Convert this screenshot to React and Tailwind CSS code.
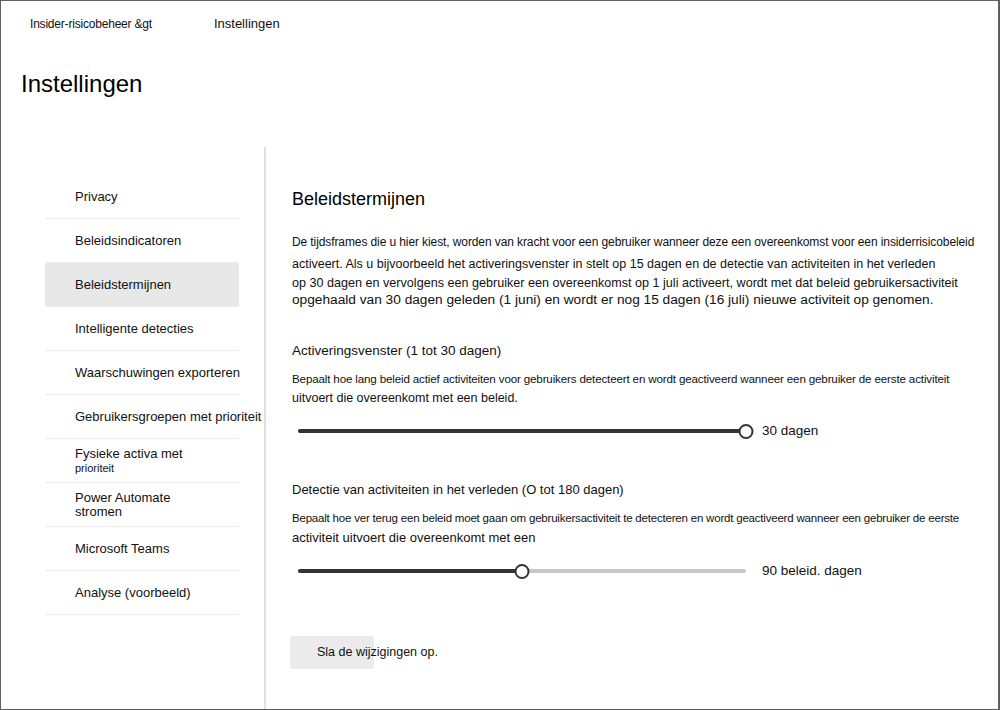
import React from "react";

const NAV_ITEMS = [
  { label: "Privacy" },
  { label: "Beleidsindicatoren" },
  { label: "Beleidstermijnen", active: true },
  { label: "Intelligente detecties" },
  { label: "Waarschuwingen exporteren" },
  { label: "Gebruikersgroepen met prioriteit" },
  { label: "Fysieke activa met", sub: "prioriteit" },
  { label: "Power Automate", sub: "stromen", subLarge: true },
  { label: "Microsoft Teams" },
  { label: "Analyse (voorbeeld)" },
];

function NavItem({ item }) {
  return (
    <div
      className={`h-[44px] flex flex-col justify-center pl-[30px] border-b border-[#ececec] ${
        item.active ? "bg-[#e8e8e8] rounded-[2px]" : ""
      }`}
    >
      <span className="text-[13px] leading-[15px] text-[#111] whitespace-nowrap">{item.label}</span>
      {item.sub ? (
        <span
          className={`${item.subLarge ? "text-[13px]" : "text-[11px]"} leading-[14px] text-[#111]`}
        >
          {item.sub}
        </span>
      ) : null}
    </div>
  );
}

function Slider({ percent }) {
  return (
    <div className="relative w-[448px] h-[16px] flex items-center">
      <div className="w-full h-[4px] rounded-full bg-[#c8c8c8]" />
      <div
        className="absolute left-0 h-[4px] rounded-full bg-[#333]"
        style={{ width: `${percent}%` }}
      />
      <div
        className="absolute w-[15px] h-[15px] rounded-full bg-white border-2 border-[#333] -translate-x-1/2"
        style={{ left: `${percent}%` }}
      />
    </div>
  );
}

export default function App() {
  return (
    <div
      className="w-[1000px] h-[710px] bg-white border border-r-2 border-[#5f5f5f] overflow-hidden flex flex-col"
      style={{ fontFamily: '"Liberation Sans", Arial, sans-serif' }}
    >
      <div className="flex items-center h-[22px] mt-[12px] text-[#111]">
        <span className="ml-[29px] text-[12px] tracking-[-0.2px]">Insider-risicobeheer &amp;gt</span>
        <span className="ml-[62px] text-[13px]">Instellingen</span>
      </div>
      <h1 className="ml-[20px] mt-[34px] text-[24px] leading-[30px] text-black">Instellingen</h1>

      <div className="flex flex-1 mt-[48px]">
        <div className="w-[265px] shrink-0 border-r-2 border-[#e0e0e0]">
          <nav className="ml-[44px] mt-[28px] w-[194px]">
            {NAV_ITEMS.map((item) => (
              <NavItem key={item.label} item={item} />
            ))}
          </nav>
        </div>

        <div className="pl-[26px] pt-[41px] text-[#111]">
          <h2 className="text-[18px] leading-[22px] text-black">Beleidstermijnen</h2>

          <div className="mt-[22px] text-[13px]">
            <div className="text-[12px] tracking-[-0.1px] leading-[20px] whitespace-nowrap">
              De tijdsframes die u hier kiest, worden van kracht voor een gebruiker wanneer deze een overeenkomst voor een insiderrisicobeleid
            </div>
            <div className="leading-[24px] text-[12.5px] whitespace-nowrap">
              activeert. Als u bijvoorbeeld het activeringsvenster in stelt op 15 dagen en de detectie van activiteiten in het verleden
            </div>
            <div className="leading-[14px] text-[12.6px] whitespace-nowrap">
              op 30 dagen en vervolgens een gebruiker een overeenkomst op 1 juli activeert, wordt met dat beleid gebruikersactiviteit
            </div>
            <div className="leading-[20px] text-[13.7px] whitespace-nowrap">
              opgehaald van 30 dagen geleden (1 juni) en wordt er nog 15 dagen (16 juli) nieuwe activiteit op genomen.
            </div>
          </div>

          <div className="mt-[32px] text-[13.5px] leading-[18px]">Activeringsvenster (1 tot 30 dagen)</div>
          <div className="mt-[10px] text-[11.6px] tracking-[-0.15px] leading-[18px] whitespace-nowrap">
            Bepaalt hoe lang beleid actief activiteiten voor gebruikers detecteert en wordt geactiveerd wanneer een gebruiker de eerste activiteit
          </div>
          <div className="text-[12.5px] leading-[20px]">uitvoert die overeenkomt met een beleid.</div>
          <div className="flex items-center mt-[13px] ml-[6px]">
            <Slider percent={100} />
            <span className="ml-[16px] text-[13.5px]">30 dagen</span>
          </div>

          <div className="mt-[40px] text-[13px] leading-[18px]">Detectie van activiteiten in het verleden (O tot 180 dagen)</div>
          <div className="mt-[10px] text-[11.5px] tracking-[-0.2px] leading-[18px] whitespace-nowrap">
            Bepaalt hoe ver terug een beleid moet gaan om gebruikersactiviteit te detecteren en wordt geactiveerd wanneer een gebruiker de eerste
          </div>
          <div className="text-[13px] leading-[22px]">activiteit uitvoert die overeenkomt met een</div>
          <div className="flex items-center mt-[12px] ml-[6px]">
            <Slider percent={50} />
            <span className="ml-[16px] text-[13.5px]">90 beleid. dagen</span>
          </div>

          <div className="mt-[54px] w-[84px] h-[33px] bg-[#ebebeb] rounded-[2px] flex items-center -ml-[2px]">
            <span className="ml-[27px] text-[12.5px] whitespace-nowrap">Sla de wijzigingen op.</span>
          </div>
        </div>
      </div>
    </div>
  );
}
